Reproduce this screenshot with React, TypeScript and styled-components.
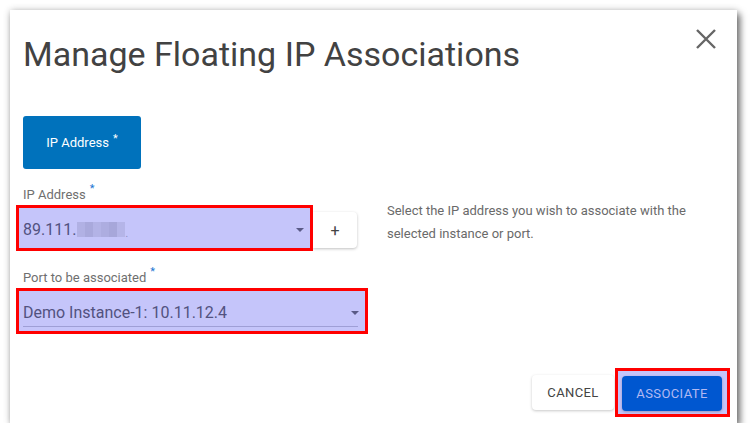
import { createGlobalStyle } from 'styled-components'
import styled from 'styled-components'

const GlobalStyle = createGlobalStyle`
  body {
    margin: 0;
    background: #fff;
    font-family: Roboto, "Liberation Sans", sans-serif;
  }
`

const blurBlocks = ['#b1b1e4', '#a9a9dc', '#b3b3e6', '#adade0', '#a7a7da', '#b5b5e8']

export default function App() {
  return (
    <>
      <GlobalStyle />
      <Page>
        <Dialog>
          <Header>
            <Title>Manage Floating IP Associations</Title>
            <CloseButton aria-label="close">
              <svg width="22" height="22" viewBox="0 0 22 22">
                <path d="M2 2 L20 20 M20 2 L2 20" stroke="#666" strokeWidth="2.4" fill="none" />
              </svg>
            </CloseButton>
          </Header>

          <Body>
            <FormColumn>
              <TabButton>
                IP Address<Star $light>*</Star>
              </TabButton>

              <FieldLabel $gap={16}>
                IP Address<Star>*</Star>
              </FieldLabel>
              <FieldRow>
                <Highlight $width={297} $height={46}>
                  <SelectValue>
                    89.111.
                    <Blurred>
                      {blurBlocks.map((c, i) => (
                        <BlurBlock key={i} style={{ background: c }} />
                      ))}
                    </Blurred>
                    <Dot>.</Dot>
                  </SelectValue>
                  <Caret />
                </Highlight>
                <PlusButton>+</PlusButton>
              </FieldRow>

              <FieldLabel $gap={17}>
                Port to be associated<Star>*</Star>
              </FieldLabel>
              <FieldRow>
                <Highlight $width={352} $height={46} $underline>
                  <SelectValue>Demo Instance-1: 10.11.12.4</SelectValue>
                  <Caret />
                </Highlight>
              </FieldRow>
            </FormColumn>

            <Description>
              Select the IP address you wish to associate with the selected instance or port.
            </Description>
          </Body>

          <Footer>
            <CancelButton>Cancel</CancelButton>
            <ButtonHighlight>
              <PrimaryButton>Associate</PrimaryButton>
            </ButtonHighlight>
          </Footer>
        </Dialog>
      </Page>
    </>
  )
}

const Page = styled.div`
  padding: 10px 0 0 10px;
`

const Dialog = styled.div`
  box-sizing: border-box;
  width: 727px;
  height: 413px;
  background: #fff;
  display: flex;
  flex-direction: column;
  box-shadow:
    3px 4px 7px rgba(0, 0, 0, 0.55),
    0 0 7px rgba(0, 0, 0, 0.18);
`

const Header = styled.div`
  display: flex;
  justify-content: space-between;
  align-items: flex-start;
  padding: 20px 20px 0 13px;
`

const Title = styled.h2`
  margin: 0;
  font-size: 34px;
  font-weight: 400;
  line-height: 48px;
  color: #424242;
`

const CloseButton = styled.button`
  border: 0;
  background: none;
  padding: 0;
  margin-top: -2px;
  display: flex;
  cursor: pointer;
`

const Body = styled.div`
  display: flex;
  gap: 19px;
  padding: 38px 0 0 13px;
`

const FormColumn = styled.div`
  width: 345px;
  display: flex;
  flex-direction: column;
  align-items: flex-start;
`

const TabButton = styled.div`
  width: 118px;
  height: 53px;
  border-radius: 3px;
  background: #0072bc;
  color: #fff;
  font-size: 13px;
  display: flex;
  align-items: center;
  justify-content: center;
  box-sizing: border-box;
`

const Star = styled.sup<{ $light?: boolean }>`
  font-size: 11px;
  margin-left: 4px;
  line-height: 0;
  color: ${(p) => (p.$light ? '#fff' : '#1976d2')};
  position: relative;
  top: ${(p) => (p.$light ? '-4px' : '-2px')};
`

const FieldLabel = styled.div<{ $gap?: number }>`
  margin-top: ${(p) => p.$gap ?? 17}px;
  font-size: 13px;
  color: #6f6f6f;
  line-height: 20px;
`

const FieldRow = styled.div`
  display: flex;
  align-items: flex-start;
  margin-left: -7px;
`

const Highlight = styled.div<{ $width: number; $height: number; $underline?: boolean }>`
  box-sizing: border-box;
  width: ${(p) => p.$width}px;
  height: ${(p) => p.$height}px;
  border: 3px solid #ff0000;
  background: #c5c5fa;
  display: flex;
  align-items: center;
  justify-content: space-between;
  padding: 3px 6px 0 4px;
  position: relative;

  &::after {
    content: '';
    display: ${(p) => (p.$underline ? 'block' : 'none')};
    position: absolute;
    left: 4px;
    right: 7px;
    bottom: 4px;
    height: 1px;
    background: #9f9fd6;
  }
`

const SelectValue = styled.div`
  font-size: 16px;
  color: #52527f;
  display: flex;
  align-items: center;
`

const Blurred = styled.span`
  display: inline-flex;
  margin-left: 1px;
  height: 15px;
`

const BlurBlock = styled.span`
  width: 8px;
  height: 15px;
`

const Dot = styled.span`
  font-size: 10px;
  color: #8a8abb;
  align-self: flex-end;
`

const Caret = styled.span`
  width: 0;
  height: 0;
  border-left: 4px solid transparent;
  border-right: 4px solid transparent;
  border-top: 4px solid #5a5a86;
  margin-top: 1px;
`

const PlusButton = styled.button`
  margin-top: 7px;
  width: 44px;
  height: 36px;
  border: 0;
  border-radius: 0 4px 4px 0;
  background: #fff;
  box-shadow: 0 1px 3px rgba(0, 0, 0, 0.25);
  font-family: Roboto, sans-serif;
  font-size: 16px;
  color: #444;
  padding: 0;
`

const Description = styled.p`
  margin: 83px 0 0;
  width: 330px;
  font-size: 13px;
  line-height: 23px;
  color: #6a6a6a;
`

const Footer = styled.div`
  margin-top: auto;
  display: flex;
  justify-content: flex-end;
  align-items: center;
  padding: 0 7px 6px 0;
  gap: 1px;
`

const CancelButton = styled.button`
  width: 82px;
  height: 35px;
  border: 0;
  border-radius: 4px;
  background: #fff;
  box-shadow: 0 1px 3px rgba(0, 0, 0, 0.22);
  font-family: Roboto, sans-serif;
  font-size: 13px;
  text-transform: uppercase;
  letter-spacing: 0.4px;
  color: #444;
`

const ButtonHighlight = styled.div`
  border: 3px solid #ff0000;
  background: #c5c5fa;
  padding: 5px 5px 3px 4px;
  display: flex;
`

const PrimaryButton = styled.button`
  width: 100px;
  height: 35px;
  border: 0;
  border-radius: 4px;
  background: #0057d0;
  box-shadow: 0 1px 3px rgba(0, 0, 0, 0.25);
  font-family: Roboto, sans-serif;
  font-size: 13px;
  text-transform: uppercase;
  letter-spacing: 0.4px;
  color: #b2b9f2;
`
